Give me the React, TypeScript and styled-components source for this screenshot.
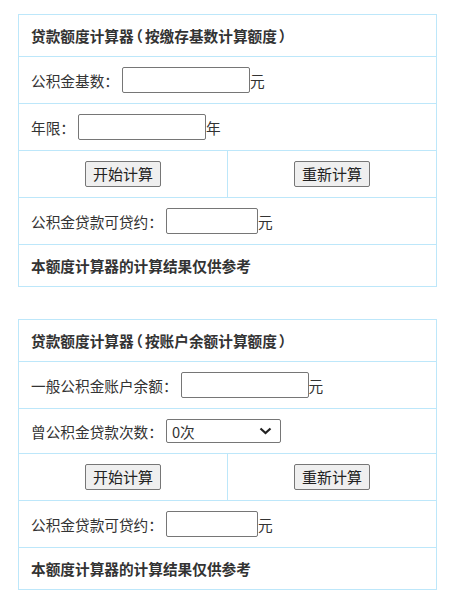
import React, { useState } from 'react';
import styled, { createGlobalStyle } from 'styled-components';

const GlobalStyle = createGlobalStyle`
  html, body {
    margin: 0;
    padding: 0;
    background: #fff;
  }

  body {
    font-family: "Noto Sans CJK SC", "Noto Sans", sans-serif;
    font-size: 14.67px;
    color: #333;
  }
`;

const Page = styled.div`
  padding: 14px 0 0 18px;
`;

const Calc = styled.table`
  width: 419px;
  border-collapse: collapse;
  margin-bottom: 32px;

  td {
    border: 1px solid #bde7fa;
    padding: 0 12px;
    font-size: 14.67px;
    color: #333;
    white-space: nowrap;
  }
`;

const TitleCell = styled.td`
  height: 41px;
  font-weight: bold;
`;

// fullwidth brackets squeezed to about the reference width
const Paren = styled.span`
  font-feature-settings: "halt";
  padding: 0 2px;
`;

const FieldCell = styled.td`
  height: ${(p: { $h?: number }) => p.$h ?? 46}px;
`;

const ButtonCell = styled.td`
  height: 46px;
  text-align: center;
  width: 50%;
`;

const Field = styled.span`
  display: inline-flex;
  align-items: center;
`;

const Label = styled.span`
  margin-right: 3px;
`;

const TextInput = styled.input<{ $w: number }>`
  box-sizing: border-box;
  width: ${(p) => p.$w}px;
  height: 26px;
  border: 1px solid #767676;
  border-radius: 2px;
  padding: 0 4px;
  font: inherit;
  background: #fff;
  outline: none;
`;

const SelectBox = styled.div`
  position: relative;
  display: inline-flex;
  align-items: center;
  box-sizing: border-box;
  width: 115px;
  height: 24px;
  border: 1px solid #767676;
  border-radius: 2px;
  padding: 0 5px;
  background: #fff;
  font-size: 14.67px;
  color: #333;
`;

const Chevron = styled.svg`
  position: absolute;
  right: 8px;
  top: 7px;
`;

const Btn = styled.button`
  height: 26px;
  padding: 0 7px;
  border: 1px solid #767676;
  border-radius: 2px;
  background: #efefef;
  font-family: "Noto Sans CJK SC", sans-serif;
  font-size: 15px;
  color: #222;
  line-height: 24px;
`;

function Title({ by }: { by: string }) {
  return (
    <tr>
      <TitleCell colSpan={2}>
        贷款额度计算器<Paren>（</Paren>{by}<Paren>）</Paren>
      </TitleCell>
    </tr>
  );
}

function Buttons() {
  return (
    <tr>
      <ButtonCell>
        <Btn>开始计算</Btn>
      </ButtonCell>
      <ButtonCell>
        <Btn>重新计算</Btn>
      </ButtonCell>
    </tr>
  );
}

function Result() {
  return (
    <>
      <tr>
        <FieldCell colSpan={2}>
          <Field>
            <Label>公积金贷款可贷约：</Label>
            <TextInput $w={92} readOnly />元
          </Field>
        </FieldCell>
      </tr>
      <tr>
        <TitleCell colSpan={2}>本额度计算器的计算结果仅供参考</TitleCell>
      </tr>
    </>
  );
}

export default function App() {
  const [base, setBase] = useState('');
  const [years, setYears] = useState('');
  const [balance, setBalance] = useState('');

  return (
    <Page>
      <GlobalStyle />

      <Calc>
        <tbody>
          <Title by="按缴存基数计算额度" />
          <tr>
            <FieldCell colSpan={2}>
              <Field>
                <Label>公积金基数：</Label>
                <TextInput $w={128} value={base} onChange={(e) => setBase(e.target.value)} />元
              </Field>
            </FieldCell>
          </tr>
          <tr>
            <FieldCell colSpan={2}>
              <Field>
                <Label>年限：</Label>
                <TextInput $w={128} value={years} onChange={(e) => setYears(e.target.value)} />年
              </Field>
            </FieldCell>
          </tr>
          <Buttons />
          <Result />
        </tbody>
      </Calc>

      <Calc>
        <tbody>
          <Title by="按账户余额计算额度" />
          <tr>
            <FieldCell colSpan={2}>
              <Field>
                <Label>一般公积金账户余额：</Label>
                <TextInput $w={128} value={balance} onChange={(e) => setBalance(e.target.value)} />元
              </Field>
            </FieldCell>
          </tr>
          <tr>
            <FieldCell colSpan={2} $h={44}>
              <Field>
                <Label>曾公积金贷款次数：</Label>
                <SelectBox>
                  0次
                  <Chevron width="13" height="8" viewBox="0 0 13 8">
                    <path d="M1.5 1.5 L6.5 6 L11.5 1.5" fill="none" stroke="#222" strokeWidth="2.2" />
                  </Chevron>
                </SelectBox>
              </Field>
            </FieldCell>
          </tr>
          <Buttons />
          <Result />
        </tbody>
      </Calc>
    </Page>
  );
}
